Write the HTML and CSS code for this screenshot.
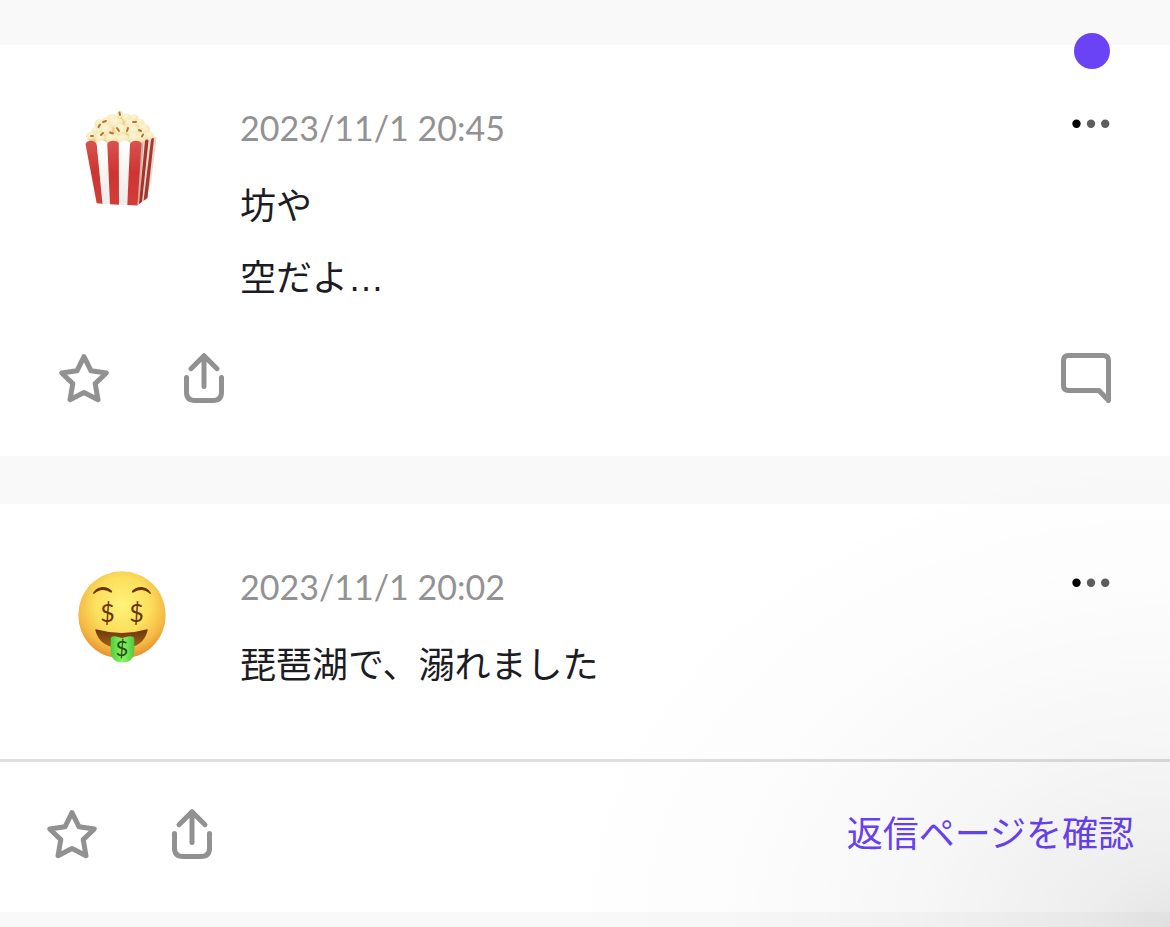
FILE: index.html
```
<!DOCTYPE html>
<html lang="ja">
<head>
<meta charset="utf-8">
<meta name="viewport" content="width=device-width, initial-scale=1">
<title>投稿</title>
<link rel="stylesheet" href="styles.css">
</head>
<body>
<svg class="defs" aria-hidden="true">
  <symbol id="star" viewBox="0 0 60 60"><path d="M30 8.7 37 22.8 52.3 25 41.2 35.6 44 51.7 30 44.6 16 51.7 18.8 35.6 7.7 25 23 22.8Z"/></symbol>
  <symbol id="share" viewBox="0 0 60 60"><path d="M12.5 29.5V44Q12.5 52.5 21 52.5H39Q47.5 52.5 47.5 44V29.5M30 38.5V8M17 20.7 30 7.7 43 20.7"/></symbol>
  <symbol id="comment" viewBox="0 0 60 60"><path d="M52.5 52.5V12.5Q52.5 7.5 47.5 7.5H12.5Q7.5 7.5 7.5 12.5V37.5Q7.5 42.5 12.5 42.5H43Z"/></symbol>
  <symbol id="more" viewBox="0 0 60 38"><circle cx="14.5" cy="18.7" r="4.2" fill="#000"/><circle cx="29" cy="18.7" r="4.2" fill="#5e5e5e"/><circle cx="43.2" cy="18.7" r="4.2" fill="#5e5e5e"/></symbol>
</svg>
<main class="feed">
  <article class="card">
    <span class="unread" role="img" aria-label="未読"></span>
    <div class="post">
      <svg class="avatar" viewBox="0 0 100 100" role="img" aria-label="ポップコーン">
        <defs>
          <radialGradient id="corn" cx=".45" cy=".3" r=".8"><stop offset="0" stop-color="#fdf6d6"/><stop offset=".65" stop-color="#f6e9b8"/><stop offset="1" stop-color="#dcc078"/></radialGradient>
          <linearGradient id="red" x1="0" y1="0" x2="0" y2="1"><stop offset="0" stop-color="#d9524e"/><stop offset=".5" stop-color="#cc3532"/><stop offset="1" stop-color="#d43c39"/></linearGradient>
          <linearGradient id="white" x1="0" y1="0" x2="0" y2="1"><stop offset="0" stop-color="#fff"/><stop offset=".5" stop-color="#f7f5f0"/><stop offset="1" stop-color="#ececec"/></linearGradient>
        </defs>
        <path fill="#e6d090" d="M17 38V32L29 18 46 12 66 18 80 33V40Z"/>
        <g fill="url(#corn)">
          <ellipse cx="48" cy="9.500" rx="3" ry="4"/><ellipse cx="40" cy="13" rx="5.500" ry="4"/><ellipse cx="55" cy="13" rx="4.500" ry="4.500"/><ellipse cx="62" cy="13" rx="4.500" ry="3.800"/>
          <ellipse cx="34" cy="17" rx="5" ry="4.500"/><ellipse cx="27" cy="19" rx="4.500" ry="5"/><ellipse cx="59" cy="19" rx="6" ry="5"/><ellipse cx="68" cy="18" rx="4.500" ry="4"/><ellipse cx="44" cy="18" rx="7" ry="6"/>
          <ellipse cx="24" cy="26" rx="4.500" ry="4"/><ellipse cx="34" cy="25" rx="6.500" ry="6"/><ellipse cx="49" cy="25" rx="6.500" ry="6"/><ellipse cx="61" cy="26" rx="6.500" ry="6"/><ellipse cx="72" cy="24" rx="6" ry="5"/>
          <ellipse cx="19" cy="31" rx="5" ry="4"/><ellipse cx="28" cy="33" rx="5" ry="6"/><ellipse cx="40" cy="33" rx="7" ry="5.200"/><ellipse cx="51" cy="34" rx="6.500" ry="5"/><ellipse cx="62" cy="33" rx="5.500" ry="6"/><ellipse cx="70" cy="32" rx="5.500" ry="5"/><ellipse cx="77" cy="31" rx="5" ry="4.500"/>
        </g>
        <g fill="none" stroke="#b87334" stroke-width="2" stroke-linecap="round">
          <path d="M47.500 7.500 48 10M28 19.500 26.500 22M31 17 34 16M45 23 47 26M38 27.500 41 28.500M56 23 55 26M67 25 69 26M31 28 29 30M19 31H21M71 29.500 70 31.500M61 17H64"/>
        </g>
        <path fill="#eadbc8" d="M68 39Q69 34 73 35.500 76 32 79 34.500 80 31 84.700 32.500L79 78 73.500 94 65.500 100Z"/>
        <path fill="#a9302d" d="M73 36Q74.500 33.500 76.500 35.500L70 97 67 99Z"/>
        <path fill="#a53834" d="M79 35Q80 32 82 33.500L75.500 93 71.500 96Z"/>
        <path fill="#7a3c36" d="M68.500 40 71.500 36.500 67.500 99 65.500 100Z" opacity=".25"/>
        <path fill="url(#red)" d="M13.500 39Q15 35.700 19 35.700 23.500 35.700 25 40L31 98.800 24.700 98.300Z"/>
        <path fill="url(#white)" d="M24.700 39Q26 35.700 30 35.700 34 35.700 35.700 39L38.500 99.300 30.500 98.700Z"/>
        <path fill="url(#red)" d="M35.300 39Q37 35.700 41 35.700 45.500 35.700 47 39V99.700L38 99.200Z"/>
        <path fill="url(#white)" d="M46.800 39Q48.500 35.700 52.500 35.700 57 35.700 58.300 39L55.500 100 47 99.700Z"/>
        <path fill="url(#red)" d="M58 39Q60 35.700 64 35.700 68 35.700 69.500 38.500L65.500 100.500 55.300 100Z"/>
      </svg>
      <div class="content">
        <time class="date" datetime="2023-11-01T20:45">2023/11/1 20:45</time>
        <p class="text">坊や<br>空だよ<span class="ellipsis">…</span></p>
      </div>
      <button class="more" type="button" aria-label="メニュー"><svg><use href="#more"/></svg></button>
    </div>
    <div class="actions">
      <button class="icon" type="button" aria-label="お気に入り"><svg><use href="#star"/></svg></button>
      <button class="icon" type="button" aria-label="共有"><svg><use href="#share"/></svg></button>
      <button class="icon end" type="button" aria-label="返信"><svg><use href="#comment"/></svg></button>
    </div>
  </article>
  <article class="card">
    <div class="post">
      <svg class="avatar" viewBox="0 0 100 100" role="img" aria-label="お金の顔">
        <defs>
          <radialGradient id="face" cx=".5" cy=".38" r=".63"><stop offset="0" stop-color="#fff27a"/><stop offset=".5" stop-color="#fcdf5c"/><stop offset=".8" stop-color="#f4b945"/><stop offset="1" stop-color="#e38b30"/></radialGradient>
          <linearGradient id="mouth" x1="0" y1="0" x2="0" y2="1"><stop offset="0" stop-color="#6d3608"/><stop offset="1" stop-color="#a4651c"/></linearGradient>
          <linearGradient id="tongue"><stop offset="0" stop-color="#4fce3d"/><stop offset=".5" stop-color="#8bf267"/><stop offset="1" stop-color="#4dcb3c"/></linearGradient>
        </defs>
        <circle cx="50" cy="51" r="43.700" fill="url(#face)"/>
        <g fill="#6b3509">
          <path d="M21 29C25 21.500 35 21 40 27 40.500 28.500 39.500 29 38 28.200 32 24.500 27 25.500 22.500 29.500 21.500 30.200 20.600 29.700 21 29Z"/>
          <path d="M79 29C75 21.500 65 21 60 27 59.500 28.500 60.500 29 62 28.200 68 24.500 73 25.500 77.500 29.500 78.500 30.200 79.400 29.700 79 29Z"/>
        </g>
        <path fill="url(#mouth)" d="M23.300 66Q23 64.800 25 65.500 50 72.500 74 65.500 76 64.800 75.700 66C73 78 64 84.500 50 84.500 36 84.500 26 78 23.300 66Z"/>
        <path fill="url(#tongue)" d="M38.700 75Q38.700 72 43 72.300L50 74 57 72.300Q62.300 72 62.300 75V87Q61.500 98.500 50.500 98.500 39.500 98.500 38.700 87Z"/>
        <g class="dollar"><text x="35.500" y="57.500">$</text><text x="64.500" y="57.500">$</text><text class="small" x="50" y="91.500">$</text></g>
      </svg>
      <div class="content">
        <time class="date" datetime="2023-11-01T20:02">2023/11/1 20:02</time>
        <p class="text">琵琶湖で、溺れました</p>
      </div>
      <button class="more" type="button" aria-label="メニュー"><svg><use href="#more"/></svg></button>
    </div>
    <div class="actions replied">
      <button class="icon" type="button" aria-label="お気に入り"><svg><use href="#star"/></svg></button>
      <button class="icon" type="button" aria-label="共有"><svg><use href="#share"/></svg></button>
      <a class="reply-link end" href="#replies">返信ページを確認</a>
    </div>
  </article>
</main>
</body>
</html>
```
FILE: styles.css
```
* { box-sizing: border-box; }

body {
  margin: 0;
  background: #f9f9f9;
  color: #1c1c24;
  font-family: Lato, "Noto Sans CJK JP", sans-serif;
  font-size: 36px;
}

.defs { position: absolute; width: 0; height: 0; }

.feed {
  position: relative;
  display: flex;
  flex-direction: column;
  gap: 48px;
  min-height: 100vh;
  padding: 45px 0 15px;
}

/* Soft shade over the lower right corner */
.feed::after {
  content: "";
  position: absolute;
  inset: 0;
  pointer-events: none;
  background: radial-gradient(620px 480px at 100% 100%, rgba(0, 0, 0, .1), rgba(0, 0, 0, .065) 14%, rgba(0, 0, 0, .032) 42%, rgba(0, 0, 0, .012) 70%, transparent);
}

.card { position: relative; background: #fff; }

.unread {
  position: absolute;
  top: -12px;
  right: 60px;
  width: 36px;
  height: 36px;
  border-radius: 50%;
  background: #6a43f5;
}

.post {
  display: flex;
  align-items: flex-start;
  padding: 60px 48px 37px 72px;
}

.avatar { flex: none; width: 100px; height: 100px; margin-right: 68px; overflow: visible; }

.dollar {
  fill: #6b3509;
  font-family: Lato, sans-serif;
  font-size: 25px;
  text-anchor: middle;
}
.dollar .small { font-size: 22px; fill: #24520c; }

.content { flex: 1; min-width: 0; }

.date {
  display: block;
  color: #929292;
  font-size: 34px;
  line-height: 46px;
}

.text { margin: 16px 0 0; font-family: "Noto Sans CJK JP", sans-serif; line-height: 72px; }

.ellipsis { font-family: "Liberation Sans", sans-serif; line-height: 1; }

button { padding: 0; border: 0; background: none; cursor: pointer; }

.more svg { display: block; width: 60px; height: 38px; }

.actions {
  display: flex;
  align-items: flex-start;
  gap: 60px;
  padding: 0 54px 48px;
}

.icon svg {
  display: block;
  width: 60px;
  height: 60px;
  fill: none;
  stroke: #919191;
  stroke-width: 5;
  stroke-linecap: round;
  stroke-linejoin: round;
}

.end { margin-left: auto; }

.replied {
  margin-top: 24px;
  padding: 42px 36px 48px 42px;
  border-top: 3px solid #dfdfdf;
}

.reply-link {
  color: #6a43f5;
  font-family: "Noto Sans CJK JP", sans-serif;
  line-height: 54px;
  text-decoration: none;
}
```
